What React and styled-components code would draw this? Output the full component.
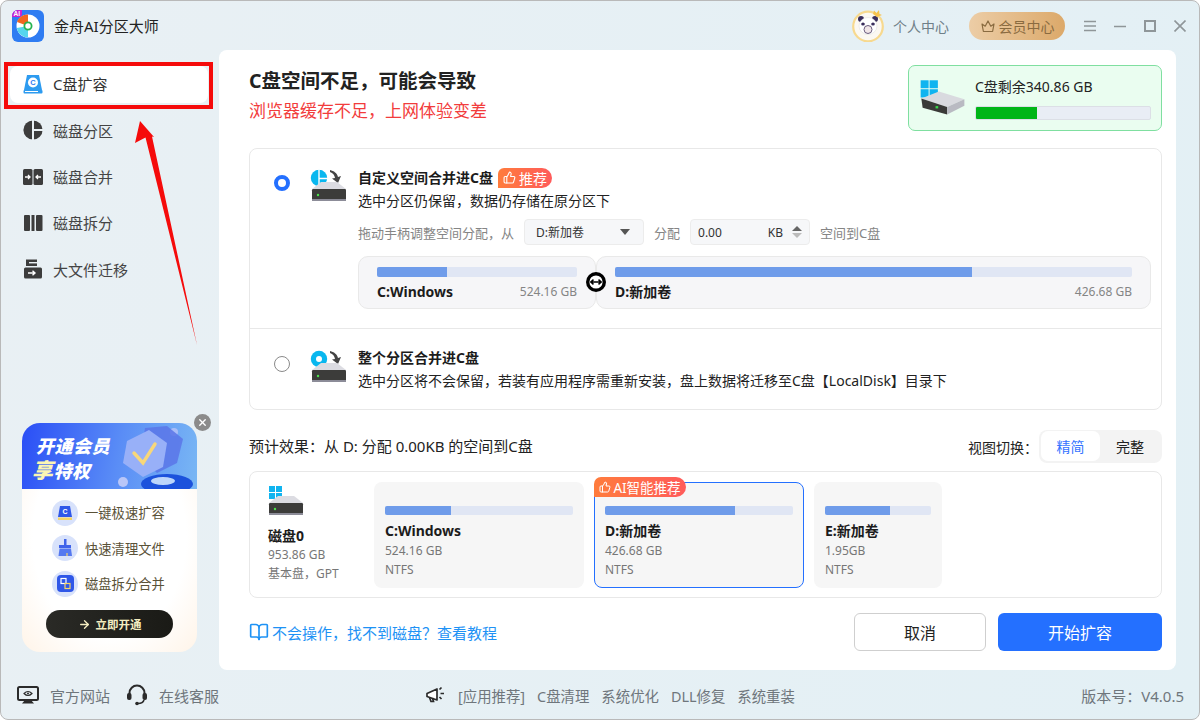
import React from "react";
import styled, { createGlobalStyle } from "styled-components";
import { ThumbsUp, BookOpen, X, ArrowRight } from "lucide-react";

const Global = createGlobalStyle`
  html, body { margin: 0; padding: 0; background: #fff; }
  * { box-sizing: border-box; }
  body { font-family: "Noto Sans", "Noto Sans CJK SC", sans-serif; }
  #root { width: 1200px; height: 720px; overflow: hidden; }
`;

const Win = styled.div`
  position: relative; width: 1200px; height: 720px; display: grid;
  grid-template-columns: 218px 1fr; grid-template-rows: 50px 620px 48px;
  border: 1px solid #b9b9b9; border-radius: 8px; overflow: hidden;
  background: linear-gradient(100deg, #e9f0f4 0%, #e3f0f5 100%);
`;
const TitleBar = styled.header`
  grid-column: 1 / 3; display: flex; align-items: center; padding: 0 0 0 11px; margin-top: -1px;
`;
const AppName = styled.span`font-size: 15px; color: #222; margin-left: 9px; line-height: 20px;`;
const TitleRight = styled.div`margin-left: auto; display: flex; align-items: center; padding-right: 13px;`;
const UserText = styled.span`font-size: 14px; color: #6f7f88; margin: 0 20px 0 8px;`;
const VipPill = styled.div`
  width: 96px; height: 28px; border-radius: 14px; display: flex; align-items: center; justify-content: center; gap: 3px;
  background: linear-gradient(90deg, #eccda6, #dca96a); color: #8a6b40; font-size: 14px;
`;
const WinButtons = styled.div`display: flex; gap: 18px; margin-left: 19px;`;
const WinGlyph = styled.svg`width: 12px; height: 12px; fill: none; stroke: #8f9699; stroke-width: 1.6;`;

const Sidebar = styled.aside`display: flex; flex-direction: column; padding: 15px 0 0 9px; min-height: 0;`;
const NavItem = styled.div`
  width: 198px; height: 46.4px; display: flex; align-items: center; gap: 10px; padding: 0 0 2px 13px;
  font-size: 15px; color: #444;
  ${p => p.$active && `background:#fff;color:#333;border-radius:8px;height:37px;margin-bottom:5px;padding-bottom:2px;`}
`;
const NavIcon = styled.svg.attrs({ viewBox: "1 1 20 20" })`width: 20px; height: 20px; flex: none;`;

const Promo = styled.div`
  position: relative; margin: auto 0 19px 12px; width: 175px; height: 229px; border-radius: 18px;
  background: radial-gradient(ellipse at center, #fff 62%, #fff4e8 100%);
`;
const PromoHead = styled.div`
  height: 66px; border-radius: 18px 18px 0 0; overflow: hidden; position: relative; padding: 11px 0 0 14px;
  background: linear-gradient(100deg, #2a4ef6 0%, #5a8df6 55%, #79b7f4 100%);
  color: #fff; font-style: italic; font-weight: 900;
`;
const PromoLine = styled.div`font-size: 18px; line-height: 24px; white-space: nowrap; letter-spacing: .5px; position: relative; z-index: 1;`;
const PromoBig = styled.span`font-size: 21px; color: #fbf6b4; margin-left: -4px;`;
const PromoArt = styled.svg`position: absolute; right: 0; top: 0; width: 90px; height: 66px;`;
const CloseDot = styled.div`
  position: absolute; right: -14px; top: -9px; width: 17px; height: 17px; border-radius: 50%;
  background: #8b8b8b; color: #fff; display: flex; align-items: center; justify-content: center;
`;
const PromoList = styled.div`display: flex; flex-direction: column; gap: 8.5px; padding: 10px 0 0 30px;`;
const PromoRow = styled.div`display: flex; align-items: center; gap: 7px; font-size: 13.3px; color: #5a5238; height: 27px; white-space: nowrap;`;
const PromoCircle = styled.div`width: 26px; height: 26px; border-radius: 50%; background: #d8e2fb; display: flex; align-items: center; justify-content: center;`;
const PromoBtn = styled.div`
  width: 127px; height: 28px; margin: 13px 0 0 24px; border-radius: 14px; background: linear-gradient(90deg, #2a2a26, #1a1a16);
  color: #f4edc0; font-size: 11.5px; font-weight: 700; display: flex; align-items: center; justify-content: center; gap: 5px;
`;

const Panel = styled.main`
  background: #fff; border-radius: 8px; margin-right: 23px; padding: 15px 14px 19px 30px;
  display: flex; flex-direction: column; margin-top: -1px; height: 620px;
`;
const HeadRow = styled.div`display: flex; justify-content: space-between; height: 66px;`;
const Heading = styled.h1`margin: 0; font-size: 19.5px; font-weight: 700; color: #222; line-height: 30px; margin-top: 1px;`;
const SubHeading = styled.div`font-size: 17px; color: #f23c3c; line-height: 26px; margin-top: 2px;`;
const StatusCard = styled.div`
  width: 254px; height: 66px; border: 1px solid #7fdfa0; border-radius: 7px; background: #eafdf0;
  display: flex; gap: 8px; padding: 10px 10px 0 10px;
`;
const StatusGlyph = styled.svg`flex: none; margin-top: 3px; width: 48px; height: 37px;`;
const StatusBody = styled.div`flex: 1; display: flex; flex-direction: column;`;
const StatusText = styled.div`font-size: 14px; color: #222; line-height: 22px; white-space: nowrap;`;
const StatusTrack = styled.div`height: 14px; margin-top: 8px; background: #e9edf5; border: 1px solid #dcdfe6; border-radius: 2px; overflow: hidden;`;
const StatusFill = styled.div`height: 100%; background: #00b517;`;

const OptionsCard = styled.section`
  margin-top: 17px; height: 262px; border: 1px solid #e8e8e8; border-radius: 8px; display: flex; flex-direction: column;
`;
const OptionRow = styled.div`
  display: flex; padding: 19px 10px 0 24px; height: ${p => p.$h}px; ${p => p.$line && "border-bottom: 1px solid #e8e8e8;"}
`;
const Radio = styled.div`
  width: 16px; height: 16px; border-radius: 50%; flex: none; margin-top: ${p => p.$mt}px; background: #fff;
  border: ${p => p.$on ? "4.5px solid #2470ff" : "1px solid #8a8a8a"};
`;
const OptionIcon = styled.svg`width: 36px; height: 33px; flex: none; margin: ${p => p.$mt}px 12px 0 20px;`;
const OptionBody = styled.div`flex: 1; min-width: 0;`;
const OptTitle = styled.div`display: flex; align-items: center; height: 20px; font-size: 14px; font-weight: 700; color: #1c1c1c; gap: 5px;`;
const OptTitleText = styled.span`padding-bottom: 2px;`;
const Recommend = styled.span`
  display: inline-flex; align-items: center; gap: 3px; height: 20px; padding: 0 5px 1px; font-size: 14px; font-weight: 400; color: #fff;
  border-radius: 6px 10px 10px 0; background: linear-gradient(90deg, #ff7c3c, #ff5b5b);
`;
const OptDesc = styled.div`font-size: 14px; line-height: 20px; margin-top: ${p => p.$mt}px; color: #222; white-space: nowrap;`;
const Controls = styled.div`display: flex; align-items: center; height: 26px; margin-top: 8px; font-size: 13px; color: #858585; white-space: nowrap;`;
const FieldBox = styled.div`
  width: 120px; height: 26px; margin: 0 10px; background: #f6f7f9; border: 1px solid #ececec; border-radius: 4px;
  display: flex; align-items: center; justify-content: space-between; padding: 0 7px 0 ${p => p.$pl}px; font-size: 12px; color: #333; position: relative;
`;
const Caret = styled.span`width: 0; height: 0; border-left: 5px solid transparent; border-right: 5px solid transparent; border-top: 6px solid #555; margin-right: 6px;`;
const Spin = styled.span`display: flex; flex-direction: column; gap: 2px;`;
const SpinUp = styled.span`width: 0; height: 0; border-left: 5px solid transparent; border-right: 5px solid transparent; border-bottom: 5px solid #666;`;
const SpinDown = styled.span`width: 0; height: 0; border-left: 5px solid transparent; border-right: 5px solid transparent; border-top: 5px solid #bbb;`;
const Kb = styled.span`margin-left: auto; margin-right: 9px;`;

const Split = styled.div`position: relative; display: grid; grid-template-columns: 238px 1fr; height: 53px; margin-top: 11px;`;
const Seg = styled.div`background: #f6f6f8; border: 1px solid #e9e9e9; border-radius: 10px; padding: 10px 18px 0;`;
const Track = styled.div`height: ${p => p.$h || 10}px; background: #e0e6f4; border-radius: 2px; overflow: hidden;`;
const Fill = styled.div`height: 100%; background: #6f9cea;`;
const SegFoot = styled.div`display: flex; justify-content: space-between; align-items: center; margin-top: 4px; height: 20px;`;
const SegName = styled.span`font-size: 14px; font-weight: 700; color: #1c1c1c;`;
const SegSize = styled.span`font-size: 12px; color: #858585;`;
const Handle = styled.div`
  position: absolute; left: 228px; top: 16px; width: 20px; height: 20px; border-radius: 50%; background: #000;
  display: flex; align-items: center; justify-content: center;
`;

const PreviewBar = styled.div`display: flex; align-items: center; justify-content: space-between; height: 33px; margin-top: 20px;`;
const PreviewText = styled.div`font-size: 15px; color: #222; padding-bottom: 2px;`;
const ViewSwitch = styled.div`display: flex; align-items: center; gap: 1px; font-size: 14px; color: #222;`;
const Toggle = styled.div`width: 123px; height: 33px; background: #f3f3f3; border-radius: 8px; display: flex; padding: 1px 2px; font-size: 14px;`;
const ToggleItem = styled.div`
  width: ${p => p.$w}px; height: 30px; display: flex; align-items: center; justify-content: center; border-radius: 7px;
  background: ${p => p.$on ? "#fff" : "transparent"}; color: ${p => p.$on ? "#3574ff" : "#222"};
`;
const DiskCard = styled.section`
  margin-top: 8px; height: 127px; border: 1px solid #e8e8e8; border-radius: 8px; display: flex; padding: 10px 0 0 18px;
`;
const DiskInfo = styled.div`width: 106px; flex: none; padding-top: 4px;`;
const DiskGlyph = styled.svg`display: block; width: 36px; height: 30px;`;
const DiskName = styled.div`font-size: 14px; font-weight: 700; color: #1c1c1c; line-height: 18px; margin-top: 11px;`;
const DiskMeta = styled.div`font-size: 12px; color: #777; line-height: 19px; white-space: nowrap;`;
const PartList = styled.div`display: flex; gap: 10px;`;
const PartCard = styled.div`
  position: relative; width: ${p => p.$w}px; height: 106px; border-radius: 8px; background: #f6f6f6; padding: 24px 11px 0;
  ${p => p.$on && "border: 1px solid #2470ff; padding: 23px 10px 0;"}
`;
const PartName = styled.div`font-size: 14px; font-weight: 700; color: #1c1c1c; line-height: 20px; margin-top: 6px;`;
const PartMeta = styled.div`font-size: 12px; color: #777; line-height: 19px;`;
const AiBadge = styled.div`
  position: absolute; left: -1px; top: -6px; height: 20px; width: 92px; display: flex; align-items: center; justify-content: center; gap: 2px;
  font-size: 13.5px; color: #fff; white-space: nowrap; border-radius: 7px 10px 10px 0; background: linear-gradient(90deg, #ff7c3c, #ff5b5b);
`;
const ActionRow = styled.div`display: flex; align-items: center; height: 38px; margin-top: 15px;`;
const HelpLink = styled.div`display: flex; align-items: center; gap: 3px; font-size: 15px; color: #1e92f5;`;
const GhostBtn = styled.div`
  margin-left: auto; width: 132px; height: 38px; border: 1px solid #cfcfcf; border-radius: 6px; display: flex; align-items: center; justify-content: center; font-size: 16px; color: #222;
`;
const PrimaryBtn = styled.div`
  margin-left: 12px; width: 164px; height: 38px; border-radius: 6px; background: #2470ff; color: #fff; display: flex; align-items: center; justify-content: center; font-size: 16px;
`;

const Footer = styled.footer`
  grid-column: 1 / 3; display: flex; align-items: center; padding: 0 15px 1px; font-size: 15px; color: #6f767c; margin-top: 1px;
`;
const FootLink = styled.span`display: flex; align-items: center; gap: ${p => p.$g}px; margin-right: ${p => p.$mr || 0}px; white-space: nowrap;`;
const FootCenter = styled.div`display: flex; align-items: center; gap: 12px; margin-left: 207px; font-size: 14.4px;`;
const Version = styled.span`margin-left: auto;`;

const Annot = styled.div`position: absolute; left: 3px; top: 61px; width: 209px; height: 47px; border: 4px solid #f50b0b; pointer-events: none;`;
const ArrowSvg = styled.svg`position: absolute; left: 119px; top: 109px; width: 90px; height: 240px; pointer-events: none;`;

const Logo = () => (
  <svg width="33" height="33" viewBox="0 0 33 33">
    <rect x="0" width="32" height="32" y="1" rx="6" fill="#2f7cf2" />
    <circle cx="16" cy="17" r="11.5" fill="#fff" />
    <path d="M16 17 L5 13 A11.5 11.5 0 0 1 16 5.5 Z" fill="#f0651f" />
    <path d="M16 17 L4.7 19 A11.5 11.5 0 0 0 16 28.5 Z" fill="#55d5ee" />
    <circle cx="16" cy="17" r="3.6" fill="#fff" stroke="#27b34f" strokeWidth="1.8" />
    <path d="M0 7 A6 6 0 0 1 6 1 H10 V5 A3 3 0 0 1 7 8 H0 Z" fill="#c81fd0" />
    <text x="1.5" y="7" fontSize="6.5" fontWeight="700" fill="#fff" fontFamily="Liberation Sans">AI</text>
  </svg>
);
const Panda = () => (
  <svg width="33" height="33" viewBox="0 0 33 33">
    <circle cx="16" cy="17.5" r="14.8" fill="#fbf8f2" stroke="#f7d98f" strokeWidth="2.2" />
    <circle cx="9" cy="10" r="3" fill="#3a2e5c" /><circle cx="23" cy="10" r="3" fill="#3a2e5c" />
    <ellipse cx="16" cy="17" rx="9" ry="8.5" fill="#fff" stroke="#ddd" strokeWidth=".5" />
    <ellipse cx="11" cy="15" rx="1.8" ry="1.6" fill="#3a2e5c" /><ellipse cx="21" cy="15" rx="1.8" ry="1.6" fill="#3a2e5c" />
    <ellipse cx="16" cy="20.5" rx="4" ry="4" fill="#f1e6e8" stroke="#6a5c7e" strokeWidth="1" />
    <path d="M21 5 L22 1.5 L24.5 4 L27 1 L27.5 5 L30 6 L25 8 Z" fill="#f6c24d" />
  </svg>
);
const Crown = () => (
  <svg width="16" height="16" viewBox="0 0 16 16" fill="none" stroke="#8a6b40" strokeWidth="1.2" strokeLinejoin="round">
    <path d="M2 6 L5.2 8.2 L8 3 L10.8 8.2 L14 6 L12.6 13.5 H3.4 Z" />
  </svg>
);
const Drive = ({ x = 0, y = 0, w = 34 }) => {
  const s = w / 34;
  return (
    <g transform={`translate(${x} ${y}) scale(${s})`}>
      <path d="M9 0 H25 L34 7 V9 H0 V7 Z" fill="#dcdce2" />
      <rect x="0" y="7" width="34" height="12" rx="1.2" fill="#3c3c3a" />
      <rect x="0" y="17" width="34" height="2" fill="#8c8c98" />
      <circle cx="6" cy="13" r="1.2" fill="#4be04b" />
    </g>
  );
};
const WinLogo = ({ x = 0, y = 0, s = 6 }) => (
  <g fill="#10b4f0" transform={`translate(${x} ${y})`}>
    <rect width={s} height={s} /><rect x={s + 1} width={s} height={s} />
    <rect y={s + 1} width={s} height={s} /><rect x={s + 1} y={s + 1} width={s} height={s} />
  </g>
);
const CurveArrow = () => (
  <path d="M20 1 C24 2 27 4 28 8 L31 7 L28 14 L22 9.5 L25 9 C24.5 6 23 4 20 3 Z" fill="#444" />
);

const NavC = () => (
  <NavIcon>
    <path d="M5 2 H17 L20 17 H2 Z" fill="#2d9bf0" /><rect x="1.5" y="17" width="19" height="3.4" rx="1" fill="#2d9bf0" />
    <rect x="3" y="18" width="13" height="1" fill="#fff" />
    <circle cx="11" cy="9.5" r="5" fill="#fff" />
    <text x="11" y="12.2" fontSize="7.5" fontWeight="700" textAnchor="middle" fill="#2d7bf0" fontFamily="Liberation Sans">C</text>
  </NavIcon>
);
const NavPie = () => (
  <NavIcon>
    <circle cx="11" cy="11" r="9.6" fill="#3c3c3c" />
    <rect x="10" y="1" width="2" height="20" fill="#eaf1f4" />
    <rect x="12" y="10" width="10" height="2" fill="#eaf1f4" />
  </NavIcon>
);
const NavMerge = () => (
  <NavIcon>
    <rect x="1" y="3" width="9.5" height="16" rx="1.5" fill="#3c3c3c" /><rect x="11.5" y="3" width="9.5" height="16" rx="1.5" fill="#3c3c3c" />
    <path d="M3 11 H7.5 M6 9 L8 11 L6 13 M19 11 H14.5 M16 9 L14 11 L16 13" stroke="#fff" strokeWidth="1.3" fill="none" />
  </NavIcon>
);
const NavSplit = () => (
  <NavIcon>
    <rect x="2" y="3" width="6" height="16" rx="1" fill="#3c3c3c" /><rect x="9.5" y="3" width="3" height="16" fill="#3c3c3c" /><rect x="14" y="3" width="6.5" height="16" rx="1" fill="#3c3c3c" />
  </NavIcon>
);
const NavMove = () => (
  <NavIcon>
    <path d="M4 1.5 H15 V8 H4 Z" fill="#3c3c3c" /><rect x="7" y="4" width="8" height="1.4" fill="#eaf1f4" />
    <rect x="2" y="9.5" width="18" height="11" rx="1.5" fill="#3c3c3c" />
    <path d="M6 15 H13 M10.5 12.8 L13 15 L10.5 17.2" stroke="#fff" strokeWidth="1.4" fill="none" />
  </NavIcon>
);

const Monitor = () => (
  <svg width="24" height="24" viewBox="0 0 24 24" fill="none">
    <rect x="2" y="4" width="20" height="13" rx="1.5" stroke="#2b2b2b" strokeWidth="2" />
    <path d="M6 20.5 H18 L15 17 H9 Z" fill="#2b2b2b" />
    <path d="M8 10.5 Q12 6.5 16 10.5 Q12 14.5 8 10.5 Z" stroke="#2b2b2b" strokeWidth="1.1" /><circle cx="12" cy="10.5" r="1" fill="#2b2b2b" />
  </svg>
);
const Headset = () => (
  <svg width="22" height="24" viewBox="0 0 22 24" fill="none">
    <path d="M3.5 13 V10 A7.5 7.5 0 0 1 18.5 10 V13" stroke="#2b2b2b" strokeWidth="2" />
    <rect x="1" y="10" width="4.5" height="7" rx="2" fill="#2b2b2b" /><rect x="16.5" y="10" width="4.5" height="7" rx="2" fill="#2b2b2b" />
    <path d="M18 17 Q17 20.5 12 20.5" stroke="#2b2b2b" strokeWidth="1.6" /><circle cx="11" cy="20.5" r="1.8" fill="#2b2b2b" />
  </svg>
);
const Speaker = () => (
  <svg width="20" height="18" viewBox="0 0 20 18" fill="none" stroke="#2b2b2b" strokeWidth="1.7">
    <path d="M1 7.5 L11 3 V14 L1 10.5 Z" fill="#fff" strokeLinejoin="round" /><path d="M3.5 11.5 L5 15.5 H7.5 L6.5 12" />
    <path d="M13.5 3.5 L15.5 1.5 M14.5 7.5 H18 M13.5 11 L15.5 13" />
  </svg>
);
const PromoIcon1 = () => (
  <svg width="16" height="16" viewBox="0 0 16 16"><path d="M3 1 H13 L15 12 H1 Z" fill="#2f57e8" /><rect x="1" y="12.5" width="14" height="2.5" fill="#f4d468" /><text x="8" y="9" textAnchor="middle" fontSize="7" fontWeight="700" fill="#fff" fontFamily="Liberation Sans">C</text></svg>
);
const PromoIcon2 = () => (
  <svg width="16" height="18" viewBox="0 0 16 18"><path d="M7 0 H9.5 V6 H14 V9 H2 V6 H7 Z" fill="#3f63ea" /><path d="M2.5 9.5 H14 L15 17 H1.5 Z" fill="#5478f0" /><path d="M10 14 V17" stroke="#f4d468" strokeWidth="1.2" /></svg>
);
const PromoIcon3 = () => (
  <svg width="17" height="17" viewBox="0 0 17 17"><rect width="17" height="17" rx="4" fill="#2f57e8" /><rect x="4" y="3.5" width="5" height="5" fill="none" stroke="#fff" strokeWidth="1.2" /><rect x="8" y="8.5" width="5" height="5" fill="none" stroke="#f4d468" strokeWidth="1.2" /></svg>
);

export default function App() {
  return (
    <Win>
      <Global />
      <TitleBar>
        <Logo />
        <AppName>金舟AI分区大师</AppName>
        <TitleRight>
          <Panda />
          <UserText>个人中心</UserText>
          <VipPill><Crown />会员中心</VipPill>
          <WinButtons>
            <WinGlyph viewBox="0 0 12 12"><path d="M0 1.5 H12 M0 6 H12 M0 10.5 H12" /></WinGlyph>
            <WinGlyph viewBox="0 0 12 12"><path d="M0 6.5 H12" /></WinGlyph>
            <WinGlyph viewBox="0 0 12 12"><rect x="1" y="1" width="10" height="10" strokeWidth="2" /></WinGlyph>
            <WinGlyph viewBox="0 0 12 12"><path d="M.5 .5 L11.5 11.5 M11.5 .5 L.5 11.5" /></WinGlyph>
          </WinButtons>
        </TitleRight>
      </TitleBar>

      <Sidebar>
        <NavItem $active><NavC />C盘扩容</NavItem>
        <NavItem><NavPie />磁盘分区</NavItem>
        <NavItem><NavMerge />磁盘合并</NavItem>
        <NavItem><NavSplit />磁盘拆分</NavItem>
        <NavItem><NavMove />大文件迁移</NavItem>
        <Promo>
          <PromoHead>
            <PromoArt viewBox="0 0 90 66">
              <circle cx="67" cy="9" r="4" fill="#a9bdf8" />
              <circle cx="16" cy="59" r="5" fill="#b9c6f8" />
              <path d="M38 5 L60 3 L76 16 L70 40 L50 50 L34 34 Z" fill="#5b76e8" opacity=".85" />
              <path d="M20 18 L42 7 L60 20 L56 44 L36 54 L16 40 Z" fill="#98b0f8" />
              <path d="M27 30 L36 40 L48 21" stroke="#f8d77a" strokeWidth="3.4" fill="none" strokeLinecap="round" />
              <ellipse cx="60" cy="61" rx="26" ry="10" fill="#1c52dc" />
              <ellipse cx="56" cy="58" rx="12" ry="4" fill="#bcd6fb" />
            </PromoArt>
            <PromoLine>开通会员</PromoLine>
            <PromoLine><PromoBig>享</PromoBig>特权</PromoLine>
          </PromoHead>
          <CloseDot><X size={11} strokeWidth={3} /></CloseDot>
          <PromoList>
            <PromoRow><PromoCircle><PromoIcon1 /></PromoCircle>一键极速扩容</PromoRow>
            <PromoRow><PromoCircle><PromoIcon2 /></PromoCircle>快速清理文件</PromoRow>
            <PromoRow><PromoCircle><PromoIcon3 /></PromoCircle>磁盘拆分合并</PromoRow>
          </PromoList>
          <PromoBtn><ArrowRight size={13} strokeWidth={2.5} />立即开通</PromoBtn>
        </Promo>
      </Sidebar>

      <Panel>
        <HeadRow>
          <div>
            <Heading>C盘空间不足，可能会导致</Heading>
            <SubHeading>浏览器缓存不足，上网体验变差</SubHeading>
          </div>
          <StatusCard>
            <StatusGlyph viewBox="355 240 145 110">
              <rect x="360" y="243" width="24" height="24" fill="#10b4f0" /><rect x="387" y="243" width="25" height="24" fill="#10b4f0" />
              <rect x="360" y="270" width="24" height="25" fill="#10b4f0" /><rect x="387" y="270" width="25" height="27" fill="#10b4f0" />
              <path d="M415 277 L492 300 L440 324 L362 298 Z" fill="#d9dadf" />
              <path d="M362 298 L440 324 V346 L366 326 Z" fill="#3a3a38" />
              <path d="M440 324 L492 300 V320 L440 346 Z" fill="#b9bac2" />
              <rect x="405" y="321" width="8" height="7" fill="#38d84a" />
            </StatusGlyph>
            <StatusBody>
              <StatusText>C盘剩余340.86 GB</StatusText>
              <StatusTrack><StatusFill style={{ width: "35%" }} /></StatusTrack>
            </StatusBody>
          </StatusCard>
        </HeadRow>

        <OptionsCard>
          <OptionRow $h={180} $line>
            <Radio $on $mt={7} />
            <OptionIcon $mt={1} viewBox="0 0 36 33">
              <circle cx="9" cy="9" r="8.2" fill="#09b7ef" />
              <path d="M9 0 V18 M9 9.5 H18" stroke="#fff" strokeWidth="1.4" />
              <CurveArrow />
              <Drive x={2} y={13} w={34} />
            </OptionIcon>
            <OptionBody>
              <OptTitle><OptTitleText>自定义空间合并进C盘</OptTitleText><Recommend><ThumbsUp size={13} />推荐</Recommend></OptTitle>
              <OptDesc $mt={3}>选中分区仍保留，数据仍存储在原分区下</OptDesc>
              <Controls>
                拖动手柄调整空间分配，从
                <FieldBox $pl={11}>D:新加卷<Caret /></FieldBox>
                分配
                <FieldBox $pl={7}>0.00<Kb>KB</Kb><Spin><SpinUp /><SpinDown /></Spin></FieldBox>
                空间到C盘
              </Controls>
              <Split>
                <Seg>
                  <Track><Fill style={{ width: "35%" }} /></Track>
                  <SegFoot><SegName>C:Windows</SegName><SegSize>524.16 GB</SegSize></SegFoot>
                </Seg>
                <Seg>
                  <Track><Fill style={{ width: "69%" }} /></Track>
                  <SegFoot><SegName>D:新加卷</SegName><SegSize>426.68 GB</SegSize></SegFoot>
                </Seg>
                <Handle>
                  <svg width="16" height="16" viewBox="0 0 16 16" fill="none">
                    <circle cx="8" cy="8" r="6.6" fill="#fff" />
                    <path d="M2.5 8 H13.5 M5.5 5.6 L2.8 8 L5.5 10.4 M10.5 5.6 L13.2 8 L10.5 10.4" stroke="#000" strokeWidth="1.5" />
                  </svg>
                </Handle>
              </Split>
            </OptionBody>
          </OptionRow>
          <OptionRow $h={80}>
            <Radio $mt={8} />
            <OptionIcon $mt={2} viewBox="0 0 36 33">
              <circle cx="9" cy="9" r="8.2" fill="#09b7ef" />
              <circle cx="9" cy="9" r="3" fill="#fff" />
              <CurveArrow />
              <Drive x={2} y={13} w={34} />
            </OptionIcon>
            <OptionBody>
              <OptTitle><OptTitleText>整个分区合并进C盘</OptTitleText></OptTitle>
              <OptDesc $mt={3}>选中分区将不会保留，若装有应用程序需重新安装，盘上数据将迁移至C盘【LocalDisk】目录下</OptDesc>
            </OptionBody>
          </OptionRow>
        </OptionsCard>

        <PreviewBar>
          <PreviewText>预计效果：从 D: 分配 0.00KB 的空间到C盘</PreviewText>
          <ViewSwitch>
            视图切换：
            <Toggle>
              <ToggleItem $on $w={59}>精简</ToggleItem>
              <ToggleItem $w={60}>完整</ToggleItem>
            </Toggle>
          </ViewSwitch>
        </PreviewBar>

        <DiskCard>
          <DiskInfo>
            <DiskGlyph viewBox="0 0 36 30">
              <WinLogo x={1} y={0} s={6} />
              <Drive x={1} y={10} w={34} />
            </DiskGlyph>
            <DiskName>磁盘0</DiskName>
            <DiskMeta>953.86 GB</DiskMeta>
            <DiskMeta>基本盘，GPT</DiskMeta>
          </DiskInfo>
          <PartList>
            <PartCard $w={210}>
              <Track $h={9}><Fill style={{ width: "35%" }} /></Track>
              <PartName>C:Windows</PartName>
              <PartMeta>524.16 GB</PartMeta>
              <PartMeta>NTFS</PartMeta>
            </PartCard>
            <PartCard $w={210} $on>
              <AiBadge><ThumbsUp size={12} />AI智能推荐</AiBadge>
              <Track $h={9}><Fill style={{ width: "69%" }} /></Track>
              <PartName>D:新加卷</PartName>
              <PartMeta>426.68 GB</PartMeta>
              <PartMeta>NTFS</PartMeta>
            </PartCard>
            <PartCard $w={128}>
              <Track $h={9}><Fill style={{ width: "61%" }} /></Track>
              <PartName>E:新加卷</PartName>
              <PartMeta>1.95GB</PartMeta>
              <PartMeta>NTFS</PartMeta>
            </PartCard>
          </PartList>
        </DiskCard>

        <ActionRow>
          <HelpLink><BookOpen size={20} />不会操作，找不到磁盘？查看教程</HelpLink>
          <GhostBtn>取消</GhostBtn>
          <PrimaryBtn>开始扩容</PrimaryBtn>
        </ActionRow>
      </Panel>

      <Footer>
        <FootLink $g={10} $mr={16}><Monitor />官方网站</FootLink>
        <FootLink $g={11}><Headset />在线客服</FootLink>
        <FootCenter>
          <Speaker />
          <span>[应用推荐]</span>
          <span>C盘清理</span>
          <span>系统优化</span>
          <span>DLL修复</span>
          <span>系统重装</span>
        </FootCenter>
        <Version>版本号：V4.0.5</Version>
      </Footer>

      <Annot />
      <ArrowSvg viewBox="0 0 90 240">
        <polygon points="20,11 15,33 25.5,27.5 77,235 32,26.5 34,27" fill="#f50b0b" />
      </ArrowSvg>
    </Win>
  );
}
